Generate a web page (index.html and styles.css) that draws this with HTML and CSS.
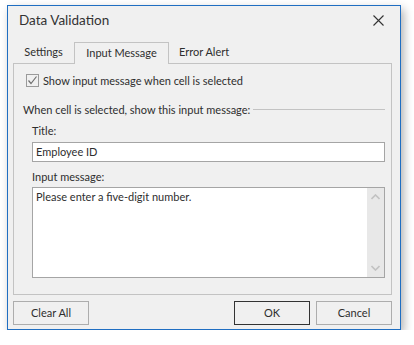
FILE: index.html
```html
<!DOCTYPE html>
<html>
	<head>
		<title>Data Validation</title>
		<link rel="stylesheet" href="styles.css">
	</head>
	<body>
		<div class="dialog">
			<div class="titlebar">
				<span class="title">Data Validation</span>
				<svg class="close" width="11" height="11" viewBox="0 0 11 11">
					<path d="M0.5 0.5 L10.5 10.5 M10.5 0.5 L0.5 10.5" stroke="#333" stroke-width="1.1" fill="none"/>
				</svg>
			</div>

			<div class="tabs">
				<div class="tab">Settings</div>
				<div class="tab active">Input Message</div>
				<div class="tab">Error Alert</div>
			</div>

			<div class="panel">
				<div class="check">
					<span class="box">
						<svg width="11" height="11" viewBox="0 0 11 11">
							<path d="M1.5 5.5 L4 8.5 L9.5 1.5" stroke="#707070" stroke-width="1.2" fill="none"/>
						</svg>
					</span>
					<span>Show input message when cell is selected</span>
				</div>

				<div class="group">
					<span>When cell is selected, show this input message:</span>
					<span class="rule"></span>
				</div>

				<div class="field_label">Title:</div>
				<div class="textbox">Employee ID</div>

				<div class="field_label label_msg">Input message:</div>
				<div class="memo">
					<div class="memo_text">Please enter a five-digit number.</div>
					<div class="scroll">
						<svg width="9" height="6" viewBox="0 0 9 6"><path d="M0.5 5 L4.5 1 L8.5 5" stroke="#c2c2c2" stroke-width="1.6" fill="none"/></svg>
						<svg width="9" height="6" viewBox="0 0 9 6"><path d="M0.5 1 L4.5 5 L8.5 1" stroke="#c2c2c2" stroke-width="1.6" fill="none"/></svg>
					</div>
				</div>
			</div>

			<div class="buttons">
				<div class="btn">Clear All</div>
				<div class="spacer"></div>
				<div class="btn default">OK</div>
				<div class="btn">Cancel</div>
			</div>
		</div>
	</body>
</html>
```

FILE: styles.css
```css
body {margin:0px;background:#ffffff;font-family:Lato,"Noto Sans",sans-serif;font-size:11px;color:#2e2e2e}
.dialog {margin:5px 0 0 7px;width:394px;height:325px;box-sizing:border-box;border:1px solid #1f6ec2;background:#f0f0f0;box-shadow:3px 4px 9px rgba(0,0,0,0.3);display:flex;flex-direction:column}

.titlebar {height:36px;box-sizing:border-box;padding:4px 16px 0 11px;display:flex;justify-content:space-between;align-items:flex-start}
.title {font-size:13.5px;line-height:20px;color:#333333}
.close {margin-top:5px}

.tabs {height:21px;padding-left:5px;display:flex;position:relative;z-index:1}
.tab {line-height:20px;height:21px;box-sizing:border-box;padding:0 10px;text-align:center}
.tab:first-child {width:61px;padding:0}
.tab.active {width:95px;padding:0;border:1px solid #c3c3c3;border-bottom:none;background:#f0f0f0;height:22px}

.panel {margin:0 8px 0 5px;height:232px;box-sizing:border-box;border:1px solid #c3c3c3}

.check {margin-top:8px;padding-left:12px;display:flex;align-items:center;height:16px}
.box {width:13px;height:13px;box-sizing:border-box;border:1px solid #9a9a9a;background:#f0f0f0;display:flex;align-items:center;justify-content:center;margin-right:4px}
.box svg {display:block}

.group {margin:13px 6px 0 9px;display:flex;align-items:center;height:16px}
.rule {flex:1;height:1px;background:#c3c3c3;margin-left:3px}

.field_label {margin-top:6px;padding-left:18px;height:16px;line-height:16px}
.label_msg {margin-top:7px}

.textbox {margin:3px 6px 0 18px;height:20px;box-sizing:border-box;border:1px solid #a5a5a5;background:#ffffff;padding-left:3px;line-height:18px}

.memo {margin:2px 6px 0 18px;height:91px;box-sizing:border-box;border:1px solid #a5a5a5;background:#ffffff;display:flex}
.memo_text {flex:1;padding:1px 0 0 3px;line-height:16px}
.scroll {width:17px;background:#e8e8e8;display:flex;flex-direction:column;justify-content:space-between;align-items:center;padding:6px 0 6px 0;box-sizing:border-box}

.buttons {margin:6px 8px 0 5px;display:flex;gap:6px}
.spacer {flex:1}
.btn {width:76px;height:24px;box-sizing:border-box;border:1px solid #adadad;text-align:center;line-height:22px}
.btn.default {border-color:#333333}
```
